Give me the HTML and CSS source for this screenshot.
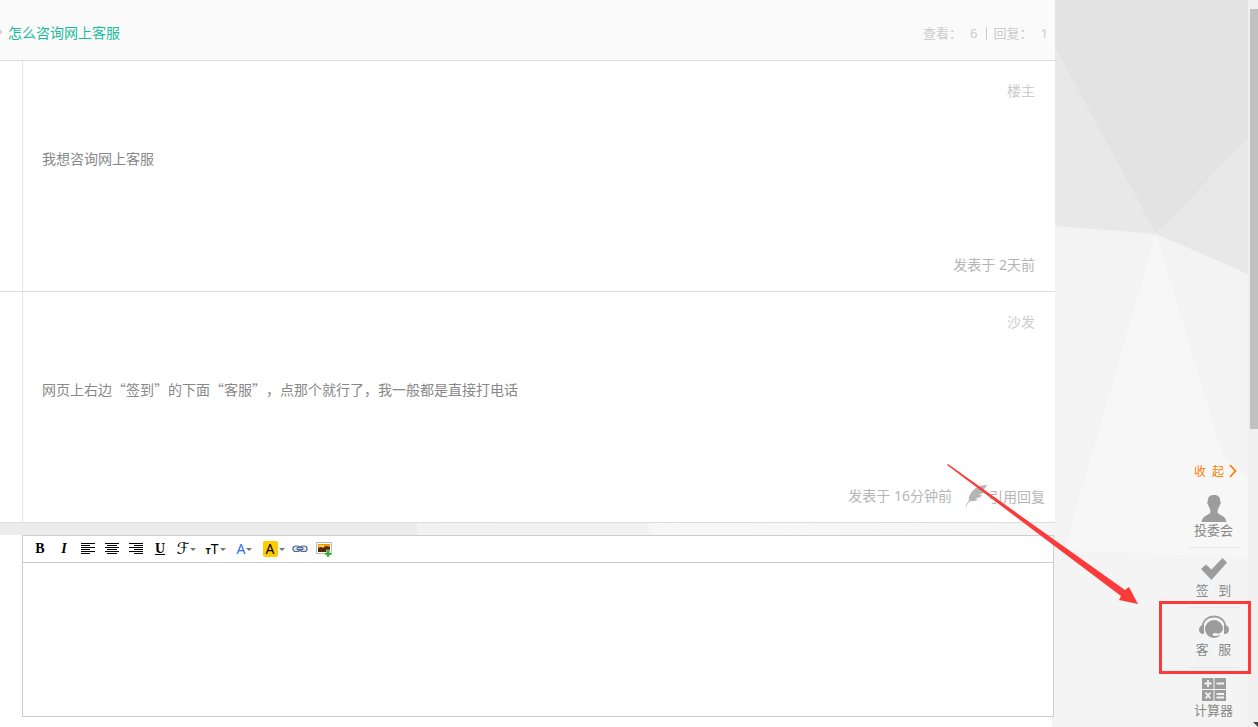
FILE: index.html
```html
<!doctype html>
<html lang="zh-CN">
  <head>
    <meta charset="UTF-8" />
    <meta name="viewport" content="width=device-width, initial-scale=1.0" />
    <title>怎么咨询网上客服</title>
    <link rel="stylesheet" href="styles.css">
  </head>
  <body>
    <main class="thread">
      <header class="thread-head">
        <a class="title" href="#">怎么咨询网上客服</a>
        <div class="stats">
          <span>查看：</span><span class="num">6</span><span class="bar"></span><span>回复：</span><span class="num">1</span>
        </div>
      </header>

      <article class="post">
        <div class="post-body">
          <div class="floor">楼主</div>
          <p class="content">我想咨询网上客服</p>
          <div class="post-foot">
            <span class="date">发表于 2天前</span>
          </div>
        </div>
      </article>

      <article class="post">
        <div class="post-body">
          <div class="floor">沙发</div>
          <p class="content">网页上右边“签到”的下面“客服”，点那个就行了，我一般都是直接打电话</p>
          <div class="post-foot">
            <span class="date">发表于 16分钟前</span>
            <a class="quote" href="#">
              <svg width="24" height="24" viewBox="0 0 24 24">
                <path fill="#b5b5b5" d="M22 1C15 1 9 4 6 9C4 12 3.500 14 4 16.500C2 19 1 21 0 23L1.500 22C2.500 20 3.500 18.500 5 17C8 17.500 11 17 13 15.500L10 15L15.500 13L17 11L13.500 11L19 8.500L20 6.500L17 6.500C20 5 21 3 22 1Z"/>
              </svg>引用回复</a>
          </div>
        </div>
      </article>

      <section class="reply">
        <form class="editor">
          <div class="toolbar">
            <button type="button" class="serif" title="粗体"><b>B</b></button>
            <button type="button" class="serif" title="斜体"><i>I</i></button>
            <button type="button" title="左对齐">
              <svg width="14" height="12" viewBox="0 0 14 12" shape-rendering="crispEdges"><path fill="#000" d="M0 0h14v1H0zM0 2h9v1H0zM0 4h14v1H0zM0 6h9v1H0zM0 8h14v1H0zM0 10h9v1H0z"/></svg>
            </button>
            <button type="button" title="居中">
              <svg width="14" height="12" viewBox="0 0 14 12" shape-rendering="crispEdges"><path fill="#000" d="M0 0h14v1H0zM2 2h10v1H2zM0 4h14v1H0zM2 6h10v1H2zM0 8h14v1H0zM2 10h10v1H2z"/></svg>
            </button>
            <button type="button" title="右对齐">
              <svg width="14" height="12" viewBox="0 0 14 12" shape-rendering="crispEdges"><path fill="#000" d="M0 0h14v1H0zM5 2h9v1H5zM0 4h14v1H0zM5 6h9v1H5zM0 8h14v1H0zM5 10h9v1H5z"/></svg>
            </button>
            <button type="button" class="serif" title="下划线"><u>U</u></button>
            <button type="button" class="drop script" title="字体">ℱ</button>
            <button type="button" class="drop size" title="字号"><small>T</small>T</button>
            <button type="button" class="drop color" title="文字颜色">A</button>
            <button type="button" class="drop" title="背景颜色"><span class="mark">A</span></button>
            <button type="button" title="链接">
              <svg width="16" height="10" viewBox="0 0 16 10">
                <g fill="none" stroke="#4f6a8c" stroke-width="1.200">
                  <rect x="1" y="2" width="7" height="5.500" rx="2.500" fill="#dce6f2"/>
                  <rect x="8" y="2" width="7" height="5.500" rx="2.500" fill="#dce6f2"/>
                  <rect x="5" y="3.700" width="6" height="2" rx="1" fill="#fff"/>
                </g>
              </svg>
            </button>
            <button type="button" title="图片">
              <svg width="16" height="16" viewBox="0 0 16 16">
                <rect x="0.500" y="1.500" width="15" height="11" fill="#fff" stroke="#b9b9b9"/>
                <path fill="#f59b00" d="M2 3h12v5H2z"/>
                <path fill="#ffd24a" d="M3 4h5v2H3z"/>
                <path fill="#4b2a06" d="M2 7l3-1 2 1 3-2 4 1v5H2z"/>
                <path fill="#3aa935" stroke="#fff" stroke-width="0.500" d="M10.500 9h3v2.500H16v2.500h-2.500v2h-3v-2H8.500v-2.500h2z"/>
              </svg>
            </button>
          </div>
          <textarea aria-label="回复内容"></textarea>
        </form>
      </section>
    </main>

    <aside class="side">
      <svg class="facets" viewBox="0 0 193 727" preserveAspectRatio="none">
        <rect width="193" height="727" fill="#f3f3f3"/>
        <path fill="#e3e3e3" d="M0 0H193V139L101 234L0 48Z"/>
        <path fill="#e8e8e8" d="M0 48L101 234L0 226Z"/>
        <path fill="#e8e8e8" d="M193 139V274L101 234Z"/>
        <path fill="#f7f7f7" d="M101 234L9 550L193 558V477L168 456Z"/>
        <path fill="#f4f4f4" d="M0 550L193 558V727H0Z"/>
      </svg>
      <nav class="tools">
        <a class="collapse" href="#">收&ensp;起
          <svg width="8" height="14" viewBox="0 0 8 14"><path fill="none" stroke="#ff7e00" stroke-width="1.800" d="M1 1L6.500 7L1 13"/></svg>
        </a>
        <a class="tool" href="#">
          <svg width="26" height="28" viewBox="0 0 26 28"><path fill="#9c9c9c" d="M13 1c4 0 6.500 2 6.200 6.500c1 .5.5 3-.5 3.500c-.5 2.500-1.500 3.500-2 4.500v3c1 3 8 2.500 8.800 9.500H.5C1.300 21 8.300 21.500 9.300 18.500v-3c-.5-1-1.500-2-2-4.500c-1-.5-1.500-3-.5-3.500C6.500 3 9 1 13 1Z"/></svg>
          <span>投委会</span>
        </a>
        <a class="tool" href="#">
          <svg width="26" height="28" viewBox="0 0 26 28"><path fill="#9c9c9c" d="M0 15L5 10.500L10.500 15.500L21.500 4L26 8.500L10.500 26Z"/></svg>
          <span>签&ensp;&nbsp;到</span>
        </a>
        <a class="tool current" href="#">
          <svg width="32" height="28" viewBox="0 0 32 28">
            <path fill="none" stroke="#9c9c9c" stroke-width="1.800" d="M4.500 14C5 7 10 3.500 16 3.500S27 7 27.500 14"/>
            <path fill="#9c9c9c" d="M6 12v9C2.500 21 1 19 1 16.500S3 12 6 12ZM26 12v9c3.500 0 5-2 5-4.500S29 12 26 12Z"/>
            <circle cx="16" cy="16" r="9" fill="#9c9c9c"/>
            <path fill="none" stroke="#f4f4f4" stroke-width="1.800" d="M16 21.500h4C23 21.500 24.500 20 25 18"/>
            <ellipse cx="17" cy="21.500" rx="2.500" ry="1.500" fill="#f4f4f4"/>
          </svg>
          <span>客&ensp;&nbsp;服</span>
        </a>
        <a class="tool" href="#">
          <svg width="24" height="28" viewBox="0 0 24 28">
            <path fill="#9c9c9c" d="M0 4h11.500v11H0zM12.500 4h11.500v11H12.500zM0 16h11.500v11H0zM12.500 16h11.500v11H12.500z"/>
            <path fill="none" stroke="#f4f4f4" stroke-width="1.800" d="M6 6v7M2.500 9.500h7M14.500 9.500h7.500M3.500 18.500l5 6M8.500 18.500l-5 6M14.500 20h7.500M14.500 23.500h7.500"/>
          </svg>
          <span>计算器</span>
        </a>
      </nav>
      <svg class="pointer" width="192" height="142" viewBox="0 0 192 142"><path fill="#fb3a3a" d="M1 0L178 126L182 123L191 140L172 136L174 132L0 1Z"/></svg>
    </aside>

    <div class="scroll">
      <div class="thumb"></div>
      <i class="down"></i>
    </div>
  </body>
</html>
```
FILE: styles.css
```css
*,
*::before,
*::after {
  box-sizing: border-box;
}
body {
  display: flex;
  min-height: 100vh;
  margin: 0;
  font-family: "Noto Sans CJK SC", sans-serif;
  font-size: 14px;
  line-height: 20px;
  text-spacing-trim: space-all;
  color: #888;
  background: #f4f4f4;
}
a {
  color: inherit;
  text-decoration: none;
}
svg {
  display: block;
}

/* thread */
.thread {
  flex: 1;
  display: flex;
  flex-direction: column;
  min-width: 0;
}
.thread-head {
  display: flex;
  justify-content: space-between;
  height: 61px;
  padding: 22px 7px 16px 0;
  background: #fafafa;
  border-bottom: 1px solid #ddd;
}
.title {
  display: flex;
  align-items: center;
  gap: 6px;
  height: 20px;
  color: #1abc9c;
}
.title::before {
  content: "";
  width: 2px;
  height: 4px;
  background: #ccc;
  border-radius: 0 2px 2px 0;
}
.stats {
  display: flex;
  align-items: center;
  height: 22px;
  font-size: 13px;
  color: #ccc;
}
.num {
  margin-left: 8px;
  font-family: "Noto Sans", sans-serif;
}
.bar {
  width: 1px;
  height: 13px;
  margin: 0 7px 0 8px;
  background: #ccc;
}
.post {
  padding-left: 22px;
  background: #fff;
  border-bottom: 1px solid #ddd;
}
.post-body {
  display: flex;
  flex-direction: column;
  min-height: 230px;
  padding: 19px 10px 16px 19px;
  border-left: 1px solid #e5e5e5;
}
.floor {
  margin-right: 10px;
  text-align: right;
  color: #ccc;
}
.content {
  flex: 1;
  margin: 48px 0 0;
}
.post-foot {
  display: flex;
  justify-content: flex-end;
  height: 20px;
  color: #b5b5b5;
}
.date {
  margin-right: 10px;
  font-family: "Noto Sans", "Noto Sans CJK SC", sans-serif;
}
.quote {
  display: flex;
  align-items: center;
  padding-left: 3px;
}

/* editor */
.reply {
  position: relative;
  flex: 1;
  margin: 12px 3px 0 0;
  padding: 0 0 10px 22px;
  background: #fff;
}
.reply::before {
  content: "";
  position: absolute;
  top: -12px;
  left: 0;
  right: -3px;
  height: 12px;
  background: linear-gradient(90deg, #ececec 39.5%, #f2f2f2 39.5%, #f1f1f1 61%, #f7f7f7 62%, #f5f5f5);
}
.editor {
  display: flex;
  flex-direction: column;
  height: 100%;
  margin-right: -2px;
  background: #fff;
  border: 1px solid #ccc;
}
.toolbar {
  display: flex;
  align-items: center;
  height: 27px;
  padding-left: 5px;
  border-bottom: 1px solid #ccc;
}
.toolbar button {
  display: flex;
  align-items: center;
  justify-content: center;
  width: 24px;
  height: 24px;
  padding: 0;
  border: none;
  background: none;
  color: #000;
  font-family: "Noto Sans", sans-serif;
  font-size: 14px;
  line-height: 16px;
  cursor: pointer;
}
.toolbar .serif {
  font-family: "Liberation Serif", serif;
  font-weight: bold;
}
.toolbar .drop {
  width: 29px;
}
.drop::after {
  content: "";
  margin-left: 1px;
  border: 3px solid transparent;
  border-top-color: #777;
  border-bottom: none;
}
.toolbar .script {
  font-family: "DejaVu Sans", sans-serif;
  font-size: 16px;
}
.toolbar .size small {
  padding-top: 3px;
  font-size: 9px;
  font-weight: bold;
}
.toolbar .color {
  color: #2a6fe8;
}
.mark {
  width: 15px;
  background: #fc0;
  border-radius: 2px;
}
.editor textarea {
  flex: 1;
  min-height: 153px;
  padding: 8px;
  border: none;
  outline: none;
  resize: none;
  font: inherit;
}

/* right side */
.side {
  position: relative;
  display: flex;
  flex-direction: column;
  justify-content: flex-end;
  align-items: flex-end;
  width: 193px;
}
.facets {
  position: absolute;
  top: 0;
  left: 0;
  width: 100%;
  height: 100%;
}
.tools {
  position: relative;
  width: 50px;
  margin-right: 9px;
  font-size: 13px;
  line-height: 16px;
  white-space: nowrap;
}
.collapse {
  display: flex;
  align-items: center;
  gap: 5px;
  padding-left: 5px;
  font-size: 12px;
  line-height: 34px;
  color: #ff7e00;
}
.tool {
  position: relative;
  display: flex;
  flex-direction: column;
  align-items: center;
  height: 60px;
  padding: 6px 1px 0 0;
  border-bottom: 1px solid #e6e6e6;
}
.tool:last-child {
  height: 59px;
  border-bottom: none;
}
.current {
  padding-top: 5px;
}
.current::after {
  content: "";
  position: absolute;
  top: -7px;
  left: -30px;
  width: 92px;
  height: 73px;
  border: 3px solid #fb3a3a;
}
.pointer {
  position: absolute;
  right: 109px;
  bottom: 121px;
}

/* scrollbar */
.scroll {
  display: flex;
  flex-direction: column;
  justify-content: space-between;
  align-items: flex-end;
  width: 10px;
  padding-top: 9px;
  background: #f0f0f0;
}
.thumb {
  width: 8px;
  height: 420px;
  background: #c1c1c1;
}
.down {
  border: 5px solid transparent;
  border-top-color: #444;
  border-right: none;
  border-bottom: none;
}
```
